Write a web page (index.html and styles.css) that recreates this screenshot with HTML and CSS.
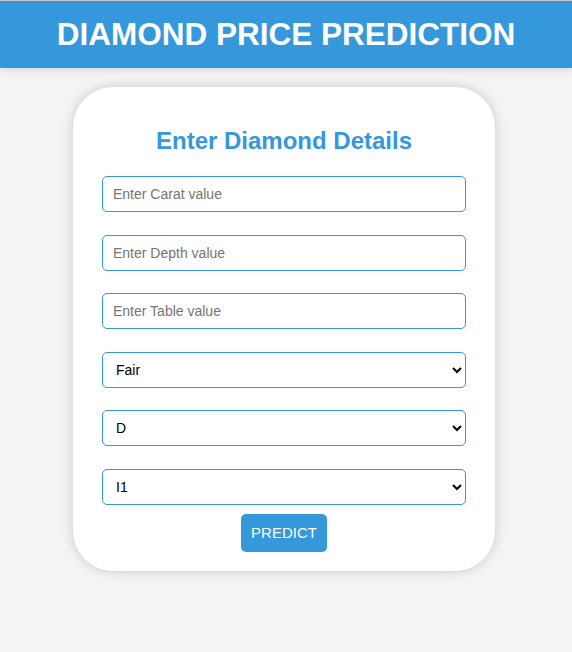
FILE: index.html
```html
<!DOCTYPE html>
<html>
<head>
<meta charset="utf-8">
<link rel="stylesheet" href="styles.css">
</head>
<body>
<header class="topbar"><h1 class="title">DIAMOND PRICE PREDICTION</h1></header>
<main class="page">
  <form class="card">
    <h2 class="card-title">Enter Diamond Details</h2>
    <input class="field" type="text" placeholder="Enter Carat value">
    <input class="field" type="text" placeholder="Enter Depth value">
    <input class="field" type="text" placeholder="Enter Table value">
    <select class="field select"><option>Fair</option><option>Good</option></select>
    <select class="field select"><option>D</option><option>E</option></select>
    <select class="field select"><option>I1</option><option>SI1</option></select>
    <button class="btn" type="button">PREDICT</button>
  </form>
</main>
</body>
</html>
```
FILE: styles.css
```css
html, body { margin: 0; padding: 0; }
body {
  background: #f4f4f4;
  font-family: "Liberation Sans", Arial, sans-serif;
  min-height: 652px;
}
.topbar {
  background: #3498db;
  border-top: 1px solid #c8c8c8;
  height: 67px;
  display: flex;
  align-items: center;
  justify-content: center;
  box-shadow: 0 2px 8px rgba(0,0,0,0.12);
}
.title {
  margin: 0;
  color: #fff;
  font-size: 31.5px;
  font-weight: bold;
}
.page {
  display: flex;
  justify-content: center;
  padding-top: 19px;
}
.card {
  width: 364px;
  background: #fff;
  border-radius: 40px;
  padding: 40px 29px 19px;
  box-shadow: 0 0 12px rgba(0,0,0,0.18);
  display: flex;
  flex-direction: column;
  align-items: stretch;
  margin-right: 4px;
}
.card-title {
  margin: 0 0 21px;
  color: #3498db;
  font-size: 24px;
  font-weight: bold;
  text-align: center;
  line-height: 28px;
}
.field {
  box-sizing: border-box;
  height: 36px;
  width: 100%;
  margin: 0 0 22.5px;
  border: 1px solid #3498db;
  border-radius: 5px;
  padding: 0 10px;
  font-family: "Liberation Sans", Arial, sans-serif;
  font-size: 14px;
  background: #fff;
  color: #000;
}
.field::placeholder { color: #757575; }
.select { padding-left: 9px; font-size: 14px; }
.select:last-of-type { margin-bottom: 9px; }
.btn {
  align-self: center;
  width: 86px;
  height: 38px;
  background: #3498db;
  color: #fff;
  border: none;
  border-radius: 5px;
  font-family: "Liberation Sans", Arial, sans-serif;
  font-size: 15px;
}
```
